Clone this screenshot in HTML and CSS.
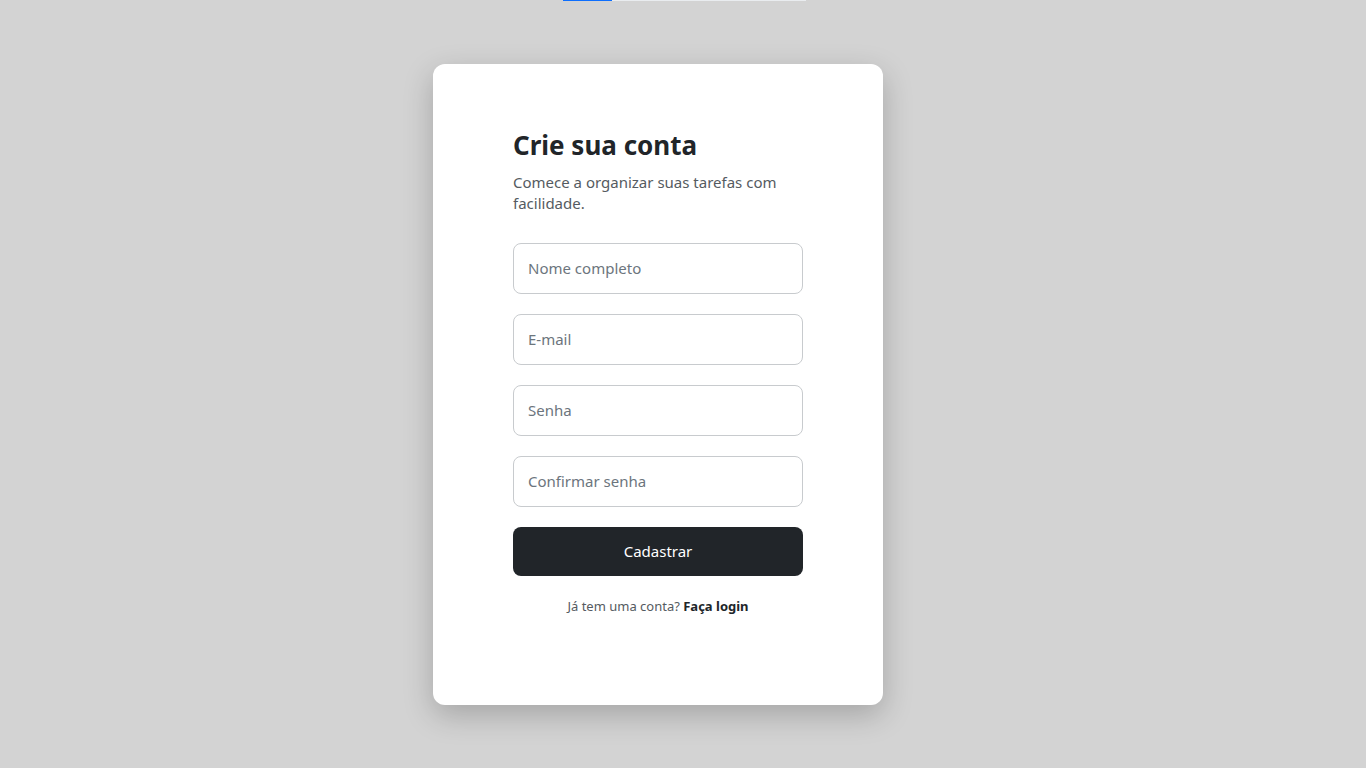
FILE: index.html
```html
<!DOCTYPE html>
<html lang="pt-BR">
<head>
<meta charset="utf-8">
<title>Crie sua conta</title>
<link rel="stylesheet" href="styles.css">
</head>
<body>
<div class="progress"><div class="progress-fill" style="width: 20%"></div></div>
<main class="page">
  <section class="card">
    <h1 class="title">Crie sua conta</h1>
    <p class="subtitle">Comece a organizar suas tarefas com facilidade.</p>
    <form class="form">
      <input class="field" type="text" placeholder="Nome completo">
      <input class="field" type="email" placeholder="E-mail">
      <input class="field" type="password" placeholder="Senha">
      <input class="field" type="password" placeholder="Confirmar senha">
      <button class="btn" type="button">Cadastrar</button>
    </form>
    <p class="footer">Já tem uma conta? <a class="link" href="#">Faça login</a></p>
  </section>
</main>
</body>
</html>
```
FILE: styles.css
```css
* { box-sizing: border-box; }
html, body { margin: 0; padding: 0; }
body {
  background: #d3d3d3;
  font-family: "Noto Sans", "Open Sans", sans-serif;
  color: #212529;
}
.progress {
  position: fixed;
  top: 0;
  left: 563px;
  width: 243px;
  height: 1px;
  background: #e9ecef;
}
.progress-fill { height: 100%; background: #0d6efd; }
.page {
  min-height: 100vh;
  display: flex;
  align-items: center;
  justify-content: center;
  padding-right: 50px;
}
.card {
  width: 450px;
  background: #fff;
  border-radius: 12px;
  padding: 64px 80px 88px;
  box-shadow: 0 10px 30px rgba(0, 0, 0, 0.22);
}
.title {
  margin: 0 0 10px;
  font-size: 26px;
  line-height: 34px;
  font-weight: 700;
  color: #212529;
}
.subtitle {
  margin: 0 0 29px;
  font-size: 15px;
  line-height: 21px;
  color: #555b61;
}
.form { display: flex; flex-direction: column; gap: 20px; }
.field {
  height: 51px;
  width: 100%;
  border: 1px solid #c8cbce;
  border-radius: 8px;
  padding: 0 14px;
  font-family: inherit;
  font-size: 15px;
  color: #212529;
  background: #fff;
}
.field::placeholder { color: #6c757d; }
.btn {
  height: 49px;
  border: 0;
  border-radius: 8px;
  background: #212529;
  color: #fff;
  font-family: inherit;
  font-size: 15px;
  cursor: pointer;
}
.footer {
  margin: 20px 0 0;
  text-align: center;
  font-size: 13px;
  line-height: 21px;
  color: #555b61;
}
.link { color: #212529; font-weight: 700; text-decoration: none; }
```
